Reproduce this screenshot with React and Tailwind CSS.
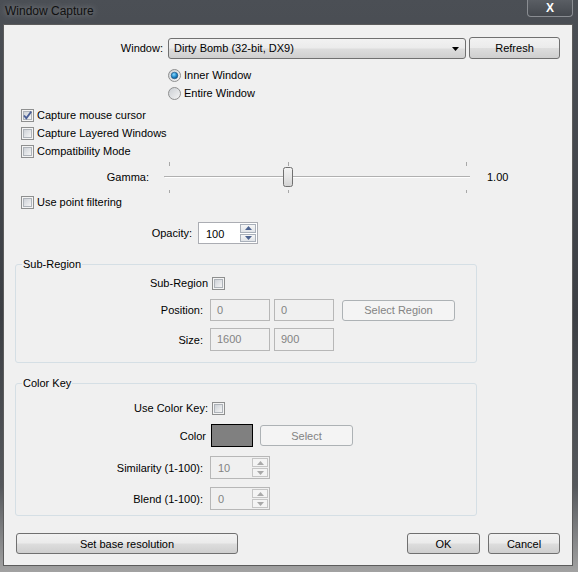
import React from 'react';

const btnFace = 'bg-[linear-gradient(#f2f2f2_0%,#ebebeb_48%,#dddddd_52%,#cfcfcf_100%)] border border-[#707070] rounded-[3px]';

const Button = ({ w, h = 21, disabled, children }) => (
  <div
    className={`flex items-center justify-center pt-[1px] ${disabled ? 'bg-[#f4f4f4] border border-[#adb2b5] rounded-[3px] text-[#838383]' : `${btnFace} text-black`}`}
    style={{ width: w, height: h }}
  >
    {children}
  </div>
);

const Check = ({ checked }) => (
  <svg width="13" height="13" viewBox="0 0 13 13" className="shrink-0">
    <defs>
      <linearGradient id="cbg" x1="0" y1="0" x2="1" y2="1">
        <stop offset="0" stopColor="#cbcfd5" />
        <stop offset="1" stopColor="#f7f7f7" />
      </linearGradient>
    </defs>
    <rect x="0.5" y="0.5" width="12" height="12" fill="#f4f4f4" stroke="#8e8f8f" />
    <rect x="2.5" y="2.5" width="8" height="8" fill="url(#cbg)" stroke="#aeb3b9" />
    {checked && <path d="M3 6.5 L5.3 9.2 L10.2 2.6" fill="none" stroke="#4a5f97" strokeWidth="1.8" />}
  </svg>
);

const Radio = ({ checked }) => (
  <svg width="13" height="13" viewBox="0 0 13 13" className="shrink-0">
    <defs>
      <linearGradient id="rbg" x1="0" y1="0" x2="1" y2="1">
        <stop offset="0" stopColor="#c9cdd2" />
        <stop offset="1" stopColor="#f6f6f6" />
      </linearGradient>
      <radialGradient id="rdot" cx="0.4" cy="0.35" r="0.7">
        <stop offset="0" stopColor="#8ad9ff" />
        <stop offset="0.6" stopColor="#1a84c6" />
        <stop offset="1" stopColor="#0c4d83" />
      </radialGradient>
    </defs>
    <circle cx="6.5" cy="6.5" r="6" fill="url(#rbg)" stroke="#8e8f8f" />
    {checked && <circle cx="6.5" cy="6.5" r="3.3" fill="url(#rdot)" stroke="#1d4f7c" strokeWidth="0.6" />}
  </svg>
);

const Arrow = ({ up, color }) => (
  <svg width="7" height="4" viewBox="0 0 7 4">
    <path d={up ? 'M0 4 L3.5 0 L7 4 Z' : 'M0 0 L3.5 4 L7 0 Z'} fill={color} />
  </svg>
);

const Spin = ({ value, disabled, h = 22 }) => (
  <div
    className={`flex items-stretch w-[60px] border ${disabled ? 'bg-[#f0f0f0] border-[#b7b7b7] text-[#838383]' : 'bg-white border-[#abadb3] text-black'}`}
    style={{ height: h }}
  >
    <div className="flex-1 pl-[7px] pt-[4px] leading-[14px]">{value}</div>
    <div className="flex flex-col gap-[1px] py-[1px] pr-[1px] w-[17px]">
      {[true, false].map((up) => (
        <div
          key={up ? 'u' : 'd'}
          className={`flex-1 flex items-center justify-center border ${disabled ? 'border-[#c5c5c5] bg-[#f4f4f4]' : 'border-[#a9b0ba] bg-[linear-gradient(#f6f6f6,#e1e4e8)]'}`}
        >
          <Arrow up={up} color={disabled ? '#a9a9a9' : '#4e6490'} />
        </div>
      ))}
    </div>
  </div>
);

const Field = ({ value, h = 22 }) => (
  <div
    className="w-[60px] bg-[#f0f0f0] border border-[#b7b7b7] text-[#838383] pl-[6px] pt-[3px] leading-[14px]"
    style={{ height: h }}
  >
    {value}
  </div>
);

const Group = ({ title, className, children }) => (
  <fieldset className={`ml-[11px] w-[462px] border border-[#d5dfe5] rounded-[3px] ${className}`}>
    <legend className="ml-[6px] px-[1px] leading-[14px]">{title}</legend>
    {children}
  </fieldset>
);

const Label = ({ w, children }) => (
  <div className="text-right shrink-0 pt-[1px]" style={{ width: w }}>{children}</div>
);

const Slider = () => (
  <svg width="310" height="34" viewBox="0 0 310 34" className="shrink-0">
    <defs>
      <linearGradient id="thumb" x1="0" y1="0" x2="0" y2="1">
        <stop offset="0" stopColor="#f4f4f4" />
        <stop offset="0.5" stopColor="#e6e6e6" />
        <stop offset="1" stopColor="#d2d2d2" />
      </linearGradient>
    </defs>
    {[5, 124, 302].map((x) => (
      <g key={x} stroke="#a8a8a8">
        <line x1={x + 0.5} y1="2" x2={x + 0.5} y2="6" />
        <line x1={x + 0.5} y1="30" x2={x + 0.5} y2="33" />
      </g>
    ))}
    <line x1="0" y1="16.5" x2="306" y2="16.5" stroke="#b0b0b0" />
    <line x1="1" y1="17.5" x2="306" y2="17.5" stroke="#ffffff" />
    <rect x="119.5" y="7.5" width="9" height="19" rx="2" fill="url(#thumb)" stroke="#707070" />
  </svg>
);

export default function App() {
  return (
    <div className="w-[578px] h-[572px] bg-[linear-gradient(#4b4f55_0%,#3c3f44_55%,#55585c_85%,#a2a2a2_100%)] font-['Liberation_Sans',sans-serif] text-[11px] text-black overflow-hidden">
      {/* title bar */}
      <div className="h-[24px] flex items-start justify-between">
        <div className="pl-[5px] pt-[4px] text-[12px] leading-[14px] text-[#101010] [text-shadow:0_0_6px_rgba(255,255,255,0.45)]">
          Window Capture
        </div>
        <div className="mr-[5px] w-[46px] h-[17px] border border-[#8a8d92] border-t-0 rounded-b-[4px] bg-[linear-gradient(#5a5e64,#44484e)] flex items-center justify-center text-white font-bold text-[12px] leading-none">
          X
        </div>
      </div>

      {/* client area */}
      <div className="ml-[3px] w-[570px] h-[542px] border border-[#5c5c5c] bg-[#f0f0f0] flex flex-col">
        {/* window row */}
        <div className="mt-[12px] h-[22px] flex items-center">
          <Label w={159}>Window:</Label>
          <div className={`ml-[5px] w-[298px] h-[21px] ${btnFace} flex items-center justify-between pl-[5px] pr-[6px] pt-[1px]`}>
            <span>Dirty Bomb (32-bit, DX9)</span>
            <Arrow color="#000" />
          </div>
          <div className="ml-[3px]">
            <Button w={91} h={22}>Refresh</Button>
          </div>
        </div>

        <div className="mt-[7px] pl-[164px] flex flex-col">
          <div className="h-[18px] flex items-center gap-[3px]"><Radio checked /> Inner Window</div>
          <div className="h-[18px] flex items-center gap-[3px]"><Radio /> Entire Window</div>
        </div>

        <div className="mt-[4px] pl-[17px] flex flex-col">
          <div className="h-[18px] flex items-center gap-[3px]"><Check checked /> Capture mouse cursor</div>
          <div className="h-[18px] flex items-center gap-[3px]"><Check /> Capture Layered Windows</div>
          <div className="h-[18px] flex items-center gap-[3px]"><Check /> Compatibility Mode</div>
        </div>

        {/* gamma */}
        <div className="h-[34px] flex items-center">
          <Label w={145}>Gamma:</Label>
          <div className="ml-[15px] flex"><Slider /></div>
          <div className="ml-[13px] pt-[1px]">1.00</div>
        </div>

        <div className="h-[16px] pl-[17px] flex items-center gap-[3px]"><Check /> Use point filtering</div>

        <div className="mt-[12px] flex items-center">
          <Label w={188}>Opacity:</Label>
          <div className="ml-[6px]"><Spin value="100" /></div>
        </div>

        <Group title="Sub-Region" className="mt-[13px] h-[106px]">
          <div className="mt-[4px] h-[16px] flex items-center">
            <Label w={192}>Sub-Region</Label>
            <div className="ml-[4px] flex"><Check /></div>
          </div>
          <div className="mt-[8px] h-[22px] flex items-center">
            <Label w={187}>Position:</Label>
            <div className="ml-[7px] flex items-center gap-[4px]">
              <Field value="0" />
              <Field value="0" />
            </div>
            <div className="ml-[8px]"><Button w={113} h={21} disabled>Select Region</Button></div>
          </div>
          <div className="mt-[7px] h-[23px] flex items-center">
            <Label w={187}>Size:</Label>
            <div className="ml-[7px] flex items-center gap-[4px]">
              <Field value="1600" h={23} />
              <Field value="900" h={23} />
            </div>
          </div>
        </Group>

        <Group title="Color Key" className="mt-[13px] h-[140px]">
          <div className="mt-[10px] h-[16px] flex items-center">
            <Label w={192}>Use Color Key:</Label>
            <div className="ml-[4px] flex"><Check /></div>
          </div>
          <div className="mt-[8px] h-[23px] flex items-center">
            <Label w={190}>Color</Label>
            <div className="ml-[5px] w-[42px] h-[23px] bg-[#808080] border border-black" />
            <div className="ml-[7px]"><Button w={93} h={21} disabled>Select</Button></div>
          </div>
          <div className="mt-[9px] h-[23px] flex items-center">
            <Label w={187}>Similarity (1-100):</Label>
            <div className="ml-[7px]"><Spin value="10" disabled h={23} /></div>
          </div>
          <div className="mt-[8px] h-[23px] flex items-center">
            <Label w={187}>Blend (1-100):</Label>
            <div className="ml-[7px]"><Spin value="0" disabled h={23} /></div>
          </div>
        </Group>

        <div className="mt-[17px] pl-[12px] pr-[12px] flex items-center justify-between">
          <Button w={222} h={21}>Set base resolution</Button>
          <div className="flex items-center gap-[8px]">
            <Button w={73} h={21}>OK</Button>
            <Button w={72} h={21}>Cancel</Button>
          </div>
        </div>
      </div>
    </div>
  );
}
